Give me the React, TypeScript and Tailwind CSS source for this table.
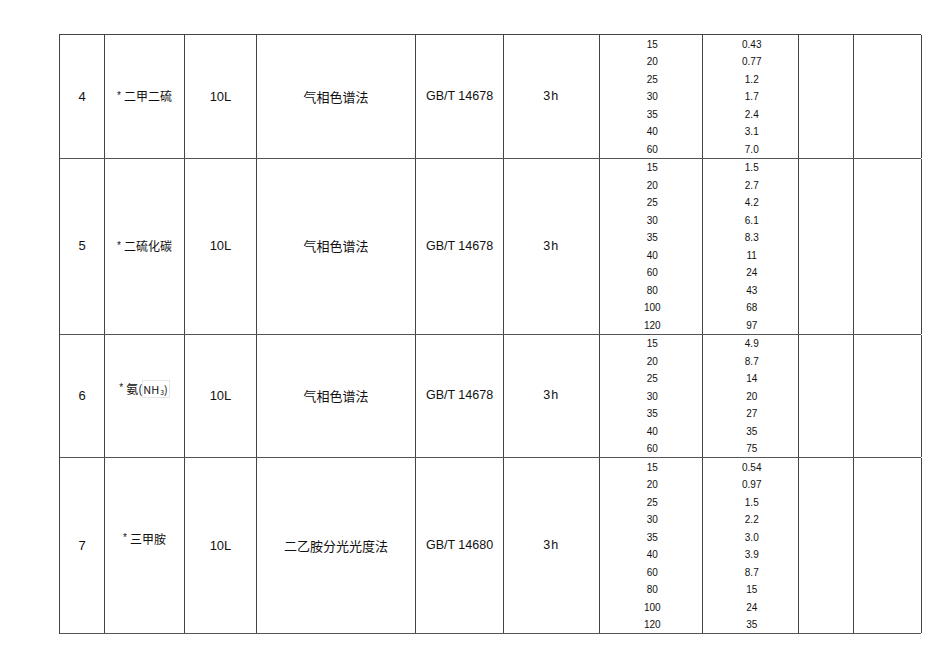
const rows = [
  {
    no: '4',
    name: <>二甲二硫</>,
    nameShift: '',
    method: '气相色谱法',
    std: 'GB/T 14678',
    data: [['15', '0.43'], ['20', '0.77'], ['25', '1.2'], ['30', '1.7'], ['35', '2.4'], ['40', '3.1'], ['60', '7.0']],
  },
  {
    no: '5',
    name: <>二硫化碳</>,
    nameShift: '',
    method: '气相色谱法',
    std: 'GB/T 14678',
    data: [['15', '1.5'], ['20', '2.7'], ['25', '4.2'], ['30', '6.1'], ['35', '8.3'], ['40', '11'], ['60', '24'], ['80', '43'], ['100', '68'], ['120', '97']],
  },
  {
    no: '6',
    name: (
      <>
        氨(<span className="border border-gray-200 pr-[1px] text-[11px]">NH<sub className="text-[7px] align-baseline ml-[1px]">3</sub>)</span>
      </>
    ),
    nameShift: 'pb-[14px]',
    method: '气相色谱法',
    std: 'GB/T 14678',
    data: [['15', '4.9'], ['20', '8.7'], ['25', '14'], ['30', '20'], ['35', '27'], ['40', '35'], ['60', '75']],
  },
  {
    no: '7',
    name: <>三甲胺</>,
    nameShift: 'pb-[14px]',
    method: '二乙胺分光光度法',
    std: 'GB/T 14680',
    data: [['15', '0.54'], ['20', '0.97'], ['25', '1.5'], ['30', '2.2'], ['35', '3.0'], ['40', '3.9'], ['60', '8.7'], ['80', '15'], ['100', '24'], ['120', '35']],
  },
]

const cell = 'border-r border-[#444] flex items-center justify-center'

export default function App() {
  return (
    <div className="min-h-[672px] w-[950px] bg-white pt-[34px] pl-[59px] text-[#111]" style={{ fontFamily: '"Liberation Sans", Arial, "Noto Sans CJK SC", sans-serif' }}>
      <div className="w-[862px] border-l border-t border-[#444]">
        {rows.map((r) => (
          <div key={r.no} className="grid grid-cols-[45px_80px_72px_159px_88px_95.5px_103.5px_95.5px_55.5px_68px] border-b border-[#555]">
            <div className={`${cell} text-[13px]`}>{r.no}</div>
            <div className={`${cell} ${r.nameShift} text-[12px]`} style={{ fontFamily: '"Noto Sans CJK SC", "Liberation Sans", sans-serif' }}>
              <span className="text-[10px] mr-[3px] relative top-[-1px]" style={{ fontFamily: '"Liberation Sans", sans-serif' }}>*</span>
              {r.name}
            </div>
            <div className={`${cell} text-[13px]`}>10L</div>
            <div className={`${cell} text-[13px]`} style={{ fontFamily: '"Noto Sans CJK SC", sans-serif' }}>{r.method}</div>
            <div className={`${cell} text-[12.5px]`}>{r.std}</div>
            <div className={`${cell} text-[12.5px] tracking-[1px]`}>3h</div>
            <div className="border-r border-[#444]">
              {r.data.map((d) => (
                <div key={d[0]} className="h-[17.5px] flex items-center justify-center text-[10px] pl-[3px] pt-[1px]">{d[0]}</div>
              ))}
            </div>
            <div className="border-r border-[#444]">
              {r.data.map((d) => (
                <div key={d[0]} className="h-[17.5px] flex items-center justify-center text-[10px] pl-[3px] pt-[1px]">{d[1]}</div>
              ))}
            </div>
            <div className="border-r border-[#444]" />
            <div className="border-r border-[#444]" />
          </div>
        ))}
      </div>
    </div>
  )
}
